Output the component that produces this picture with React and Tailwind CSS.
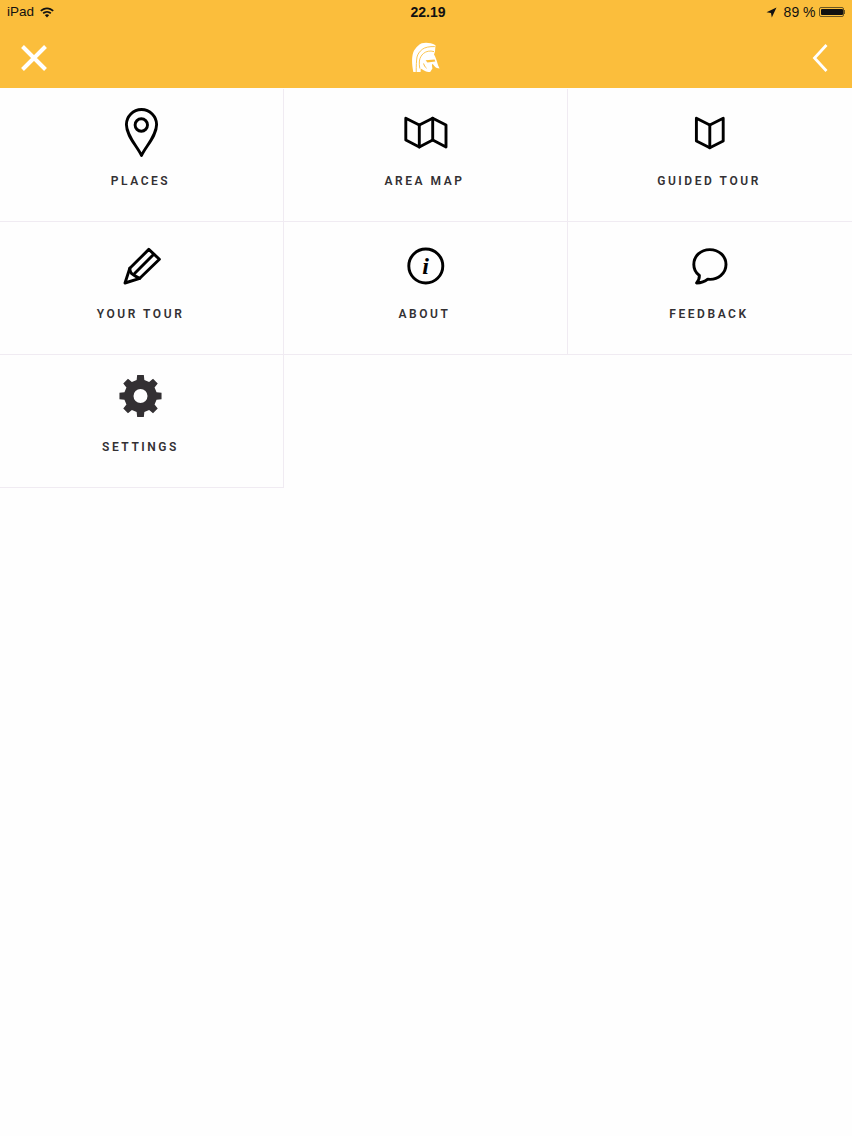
import React from "react";

function gearPath(cx, cy, rBody, rTooth, rHole, n) {
  let d = "";
  const step = (Math.PI * 2) / n;
  for (let i = 0; i < n; i++) {
    const a = -Math.PI / 2 + i * step;
    const pts = [
      [a - step * 0.3, rBody],
      [a - step * 0.2, rTooth],
      [a + step * 0.2, rTooth],
      [a + step * 0.3, rBody],
    ];
    pts.forEach(([t, r], j) => {
      const x = (cx + Math.cos(t) * r).toFixed(2);
      const y = (cy + Math.sin(t) * r).toFixed(2);
      d += (i === 0 && j === 0 ? "M" : "L") + x + " " + y + " ";
    });
  }
  d += "Z ";
  d += `M${cx - rHole} ${cy} a${rHole} ${rHole} 0 1 0 ${rHole * 2} 0 a${rHole} ${rHole} 0 1 0 ${-rHole * 2} 0 Z`;
  return d;
}

const Icon = ({ children }) => (
  <svg
    width="50"
    height="50"
    viewBox="0 0 50 50"
    fill="none"
    stroke="#000"
    strokeWidth="2.9"
    strokeLinejoin="round"
    strokeLinecap="round"
  >
    {children}
  </svg>
);

const items = [
  {
    label: "PLACES",
    icon: (
      <Icon>
        <path d="M24.5 47.5C20 38 9.4 28 9.4 16.6A15.1 15.1 0 0 1 39.6 16.6C39.6 28 29 38 24.5 47.5Z" />
        <circle cx="24.3" cy="17" r="6.2" />
      </Icon>
    ),
  },
  {
    label: "AREA MAP",
    icon: (
      <Icon>
        <path d="M4.8 10.2L18.3 17L31.7 10.2L45 17V39L31.7 32L18.3 39L4.8 32Z" />
        <path d="M18.3 17V39M31.7 10.2V32" />
      </Icon>
    ),
  },
  {
    label: "GUIDED TOUR",
    icon: (
      <Icon>
        <path d="M11.4 10.2L24.8 17L38.2 10.2V33L24.8 39.8L11.4 33Z" />
        <path d="M24.8 17V39.8" />
      </Icon>
    ),
  },
  {
    label: "YOUR TOUR",
    icon: (
      <Icon>
        <path d="M8 42L12.8 27.3L31.8 8.4L42.4 18.2L22.8 37.3Z" />
        <path d="M17.8 32.3L36.8 13.2" />
        <path d="M12.8 27.3C13 30.5 14 32.5 16 33.5C18 35 20.5 36.5 22.8 37.3" />
      </Icon>
    ),
  },
  {
    label: "ABOUT",
    icon: (
      <Icon>
        <circle cx="24.8" cy="25" r="17" />
        <text
          x="24.6"
          y="32.5"
          textAnchor="middle"
          fontFamily="'Liberation Serif', serif"
          fontStyle="italic"
          fontWeight="700"
          fontSize="24"
          fill="#000"
          stroke="none"
        >
          i
        </text>
      </Icon>
    ),
  },
  {
    label: "FEEDBACK",
    icon: (
      <Icon>
        <path d="M24.8 8.6C15.6 8.6 8.8 15.2 8.8 23.4C8.8 28 11 32 14.4 34.5C14.4 37.5 13.4 40 11.6 42C15.8 42 20 40.6 22.8 38.2C33 39.4 41 32.2 41 23.4C41 15.2 34 8.6 24.8 8.6Z" />
      </Icon>
    ),
  },
  {
    label: "SETTINGS",
    icon: (
      <svg width="50" height="50" viewBox="0 0 50 50">
        <path d={gearPath(23.5, 22, 16.5, 21.3, 7, 8)} fill="#333033" fillRule="evenodd" />
      </svg>
    ),
  },
];

export default function App() {
  return (
    <div className="min-h-[1136px] bg-[#fefefe] font-['Roboto',sans-serif]">
      <header className="h-[88px] bg-[#fbbe3c] flex flex-col">
        <div className="h-[24px] px-[7px] flex items-center justify-between text-[14px] text-[#111] font-['Liberation_Sans',sans-serif]">
          <div className="flex-1 flex items-center gap-[6px]">
            <span className="text-[13.5px]">iPad</span>
            <svg width="14" height="11" viewBox="0 0 14 11" fill="#111">
              <path d="M7 0.5C4.3 0.5 2 1.6 0.2 3.3L1.4 4.6C2.9 3.1 4.9 2.2 7 2.2S11.1 3.1 12.6 4.6L13.8 3.3C12 1.6 9.7 0.5 7 0.5Z" />
              <path d="M7 4C5.3 4 3.8 4.7 2.6 5.8L3.8 7.1C4.6 6.3 5.8 5.7 7 5.7S9.4 6.3 10.2 7.1L11.4 5.8C10.2 4.7 8.7 4 7 4Z" />
              <path d="M7 7.3C6.2 7.3 5.4 7.6 4.9 8.2L7 10.5L9.1 8.2C8.6 7.6 7.8 7.3 7 7.3Z" />
            </svg>
          </div>
          <span className="ml-[4px] font-bold">22.19</span>
          <div className="flex-1 flex items-center justify-end">
            <svg width="11" height="11" viewBox="0 0 11 11" fill="#111">
              <path d="M10.5 0.5L0.5 5.2L5 6L5.8 10.5Z" />
            </svg>
            <span className="ml-[7px] text-[14px]">89 %</span>
            <div className="ml-[3px] flex items-center">
              <div className="w-[25px] h-[10px] border border-[#6b5620] rounded-[2px] p-px">
                <div className="w-[22px] h-full bg-[#111] rounded-[1px]" />
              </div>
              <div className="w-[1.5px] h-[4px] bg-[#6b5620]" />
            </div>
          </div>
        </div>
        <div className="flex-1 pt-[4px] pl-[19px] pr-[17px] flex items-center justify-between">
          <svg width="30" height="30" viewBox="0 0 30 30" stroke="#fff" strokeWidth="4" fill="none">
            <path d="M3.5 3.5L26.5 26.5M26.5 3.5L3.5 26.5" />
          </svg>
          <svg width="30" height="32" viewBox="0 0 30 32" fill="#fff">
            <path d="M1.3 30C0.1 24 -0.2 19 0.3 14.7C0.8 11 1.6 9 3 7.3C5 4.5 7 2.6 9.7 1.3C14 0.2 19 0.8 23.5 3.2L23 9.5L22 12.5C23.5 15 24.3 17.5 25 19.7C25.6 22 26.4 24.5 27.6 26.6C25.5 26.3 24 25.6 23 24.7L20.5 21.8L19.9 23L20.4 26.5L18.2 30C16 30.1 14.5 29.6 13 28.9C11 27.9 9.6 27.2 8.7 26.5L8.6 30L4 30Z" />
            <path d="M22.8 4.6C17.5 4.4 13 5.2 10.2 7.4C7.4 9.6 5.7 12.2 5 15C4.4 18.5 4.2 24 4.2 30" stroke="#fbbe3c" strokeWidth="0.9" fill="none" />
            <path d="M22 9.6C18 8.4 14.2 9.2 11.5 11.4C9.2 13.4 7.8 16 7.4 19C7.1 21.5 7.4 24 7.8 26.5" stroke="#fbbe3c" strokeWidth="0.9" fill="none" />
            <path d="M13.6 18.2L22.6 17.4L23.3 19.6L15.4 20.4Z" fill="#fbbe3c" />
            <path d="M11.6 21.5C12.2 23.6 13.1 25.1 14.5 26.2" stroke="#fbbe3c" strokeWidth="1" fill="none" />
          </svg>
          <svg width="30" height="30" viewBox="0 0 30 30" stroke="#fff" strokeWidth="2.8" fill="none">
            <path d="M21.5 2L9.5 15L21.5 28" />
          </svg>
        </div>
      </header>
      <main className="mt-px grid grid-cols-3">
        {items.map((it) => (
          <div
            key={it.label}
            className="h-[133px] flex flex-col items-center border-r border-b border-[#f0ebf2] [&:nth-child(3n)]:border-r-0"
          >
            <div className="mt-[19px] h-[50px]">{it.icon}</div>
            <div className="mt-[15px] pr-[2px] h-[16px] leading-[16px] text-[12px] font-semibold tracking-[2.55px] text-[#333033]">
              {it.label}
            </div>
          </div>
        ))}
      </main>
    </div>
  );
}
